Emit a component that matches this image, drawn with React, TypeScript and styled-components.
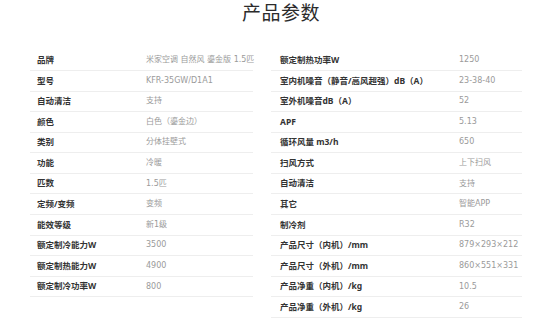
import styled, { createGlobalStyle } from "styled-components";

type Spec = { label: string; value: string };

const leftSpecs: Spec[] = [
  { label: "品牌", value: "米家空调 自然风 鎏金版 1.5匹" },
  { label: "型号", value: "KFR-35GW/D1A1" },
  { label: "自动清洁", value: "支持" },
  { label: "颜色", value: "白色（鎏金边）" },
  { label: "类别", value: "分体挂壁式" },
  { label: "功能", value: "冷暖" },
  { label: "匹数", value: "1.5匹" },
  { label: "定频/变频", value: "变频" },
  { label: "能效等级", value: "新1级" },
  { label: "额定制冷能力W", value: "3500" },
  { label: "额定制热能力W", value: "4900" },
  { label: "额定制冷功率W", value: "800" },
];

const rightSpecs: Spec[] = [
  { label: "额定制热功率W", value: "1250" },
  { label: "室内机噪音（静音/高风超强）dB（A）", value: "23-38-40" },
  { label: "室外机噪音dB（A）", value: "52" },
  { label: "APF", value: "5.13" },
  { label: "循环风量 m3/h", value: "650" },
  { label: "扫风方式", value: "上下扫风" },
  { label: "自动清洁", value: "支持" },
  { label: "其它", value: "智能APP" },
  { label: "制冷剂", value: "R32" },
  { label: "产品尺寸（内机）/mm", value: "879×293×212" },
  { label: "产品尺寸（外机）/mm", value: "860×551×331" },
  { label: "产品净重（内机）/kg", value: "10.5" },
  { label: "产品净重（外机）/kg", value: "26" },
];

const GlobalStyle = createGlobalStyle`
  html, body {
    margin: 0;
    padding: 0;
    background: #fff;
  }
  body {
    font-family: "Noto Sans CJK SC", "Noto Sans", sans-serif;
    color: #333;
  }
`;

const Page = styled.div`
  width: 550px;
  height: 322px;
  overflow: hidden;
  background: #fff;
`;

const Title = styled.h2`
  margin: 0;
  padding-left: 12px;
  height: 25px;
  line-height: 24px;
  text-align: center;
  font-size: 19px;
  font-weight: 400;
  letter-spacing: 0.5px;
  color: #2b2b2b;
`;

const Tables = styled.div`
  display: flex;
  gap: 18px;
  padding-left: 30px;
  margin-top: 25.4px;
`;

const Table = styled.div<{ $width: number }>`
  width: ${(p) => p.$width}px;
  display: flex;
  flex-direction: column;
`;

const Row = styled.div<{ $indent: number; $labelWidth: number }>`
  box-sizing: border-box;
  height: 20.58px;
  display: grid;
  grid-template-columns: ${(p) => p.$labelWidth}px 1fr;
  align-items: center;
  padding-left: ${(p) => p.$indent}px;
  border-bottom: 1px solid #eeeeee;
  white-space: nowrap;
`;

const Label = styled.span`
  font-family: "Noto Sans", "Noto Sans CJK SC", sans-serif;
  font-size: 8.5px;
  font-weight: 700;
  color: #333;
  line-height: 1;
`;

const Value = styled.span`
  font-family: "DejaVu Sans", "Noto Sans CJK SC", sans-serif;
  font-size: 8px;
  font-weight: 400;
  color: #9a9a9a;
  line-height: 1;
`;

function SpecTable({
  specs,
  width,
  indent,
  labelWidth,
}: {
  specs: Spec[];
  width: number;
  indent: number;
  labelWidth: number;
}) {
  return (
    <Table $width={width}>
      {specs.map((s, i) => (
        <Row key={i} $indent={indent} $labelWidth={labelWidth}>
          <Label>{s.label}</Label>
          <Value>{s.value}</Value>
        </Row>
      ))}
    </Table>
  );
}

export default function App() {
  return (
    <Page>
      <GlobalStyle />
      <Title>产品参数</Title>
      <Tables>
        <SpecTable specs={leftSpecs} width={223} indent={7} labelWidth={109} />
        <SpecTable specs={rightSpecs} width={251} indent={9} labelWidth={179} />
      </Tables>
    </Page>
  );
}
